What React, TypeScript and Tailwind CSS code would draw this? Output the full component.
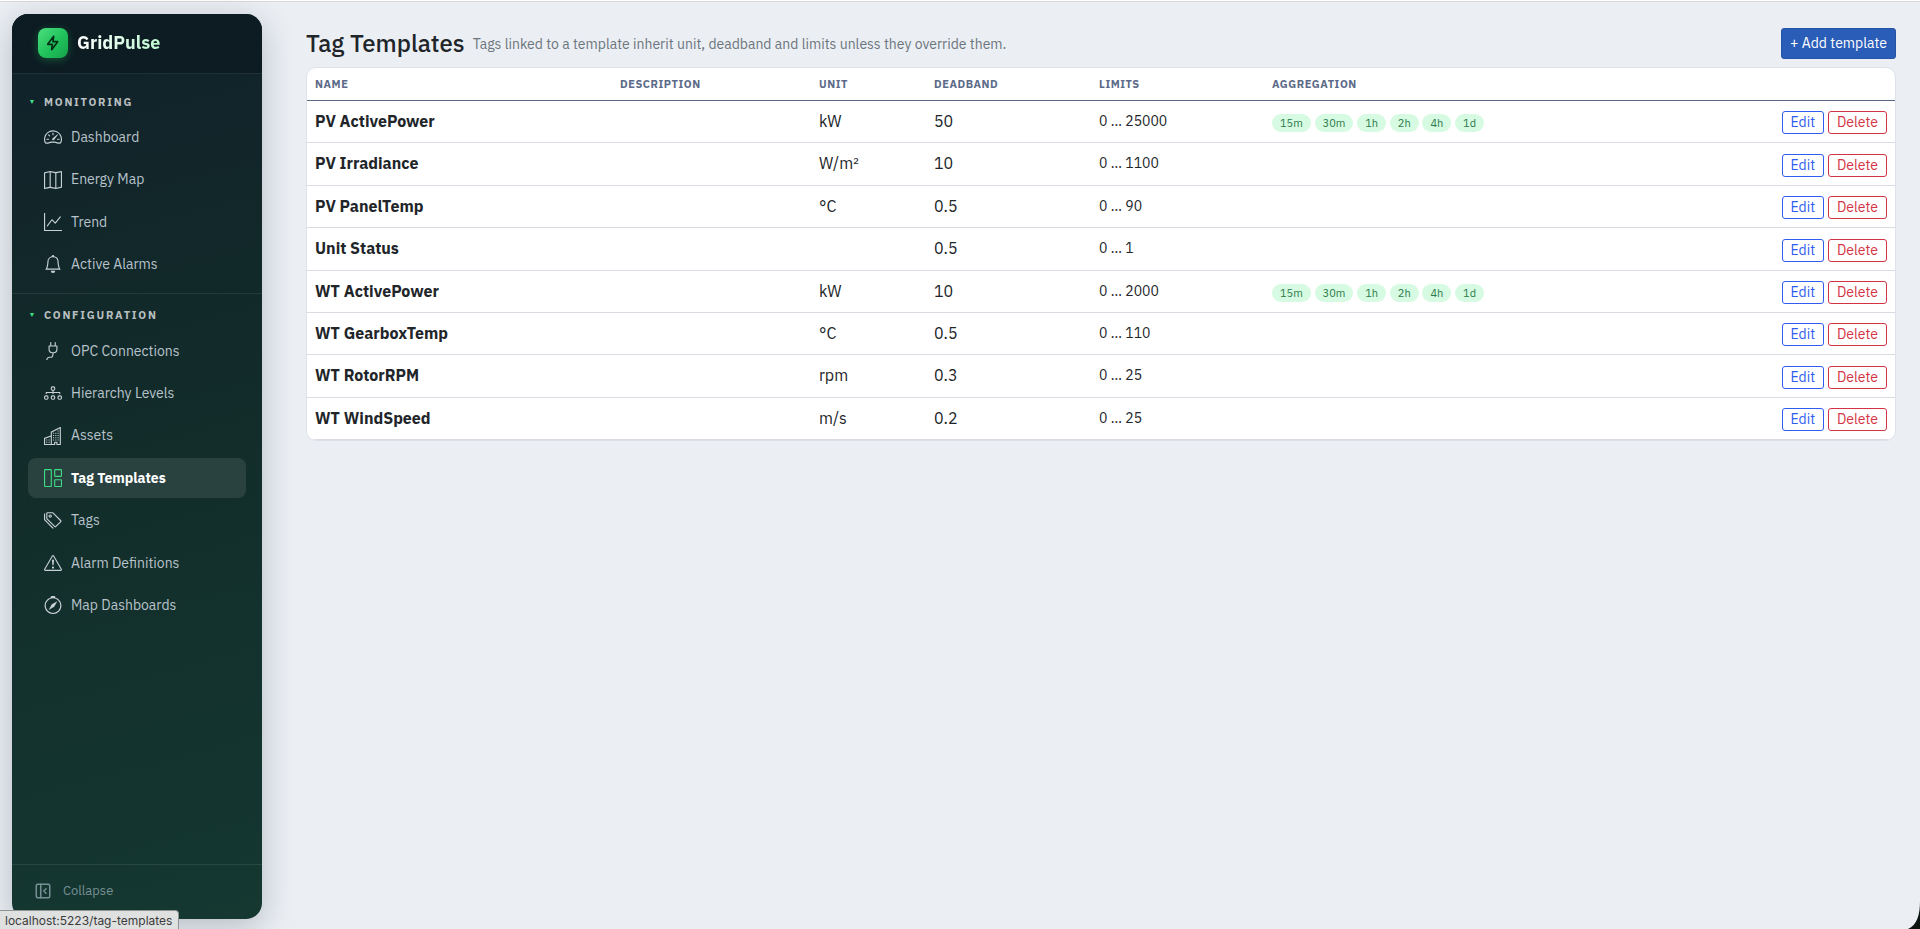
import React from "react";
import { LuPanelLeftClose } from "react-icons/lu";
import {
  BsBell,
  BsBuildings,
  BsCompass,
  BsDiagram3,
  BsExclamationTriangle,
  BsGraphUp,
  BsGrid1X2,
  BsMap,
  BsPlug,
  BsSpeedometer2,
  BsTags,
} from "react-icons/bs";
import type { IconType } from "react-icons";

type NavItem = { label: string; icon: IconType; active?: boolean };

const monitoring: NavItem[] = [
  { label: "Dashboard", icon: BsSpeedometer2 },
  { label: "Energy Map", icon: BsMap },
  { label: "Trend", icon: BsGraphUp },
  { label: "Active Alarms", icon: BsBell },
];

const configuration: NavItem[] = [
  { label: "OPC Connections", icon: BsPlug },
  { label: "Hierarchy Levels", icon: BsDiagram3 },
  { label: "Assets", icon: BsBuildings },
  { label: "Tag Templates", icon: BsGrid1X2, active: true },
  { label: "Tags", icon: BsTags },
  { label: "Alarm Definitions", icon: BsExclamationTriangle },
  { label: "Map Dashboards", icon: BsCompass },
];

const periods = ["15m", "30m", "1h", "2h", "4h", "1d"];

const templates = [
  { name: "PV ActivePower", unit: "kW", deadband: "50", limits: "0 … 25000", aggregation: periods },
  { name: "PV Irradiance", unit: "W/m²", deadband: "10", limits: "0 … 1100", aggregation: [] },
  { name: "PV PanelTemp", unit: "°C", deadband: "0.5", limits: "0 … 90", aggregation: [] },
  { name: "Unit Status", unit: "", deadband: "0.5", limits: "0 … 1", aggregation: [] },
  { name: "WT ActivePower", unit: "kW", deadband: "10", limits: "0 … 2000", aggregation: periods },
  { name: "WT GearboxTemp", unit: "°C", deadband: "0.5", limits: "0 … 110", aggregation: [] },
  { name: "WT RotorRPM", unit: "rpm", deadband: "0.3", limits: "0 … 25", aggregation: [] },
  { name: "WT WindSpeed", unit: "m/s", deadband: "0.2", limits: "0 … 25", aggregation: [] },
];

function NavGroup({ title, items }: { title: string; items: NavItem[] }) {
  return (
    <section>
      <button type="button" className="mb-0.5 flex h-[26px] w-full items-center gap-2 px-4 text-[11px] font-bold uppercase tracking-[0.16em] text-[#b9bfc0]">
        <span className="w-2 text-center text-[7px] tracking-normal text-[#3ddc84]">▼</span>
        {title}
      </button>
      <ul className="flex flex-col gap-0.5 px-4">
        {items.map(({ label, icon: Icon, active }) => (
          <li key={label}>
            <a
              href="#"
              aria-current={active ? "page" : undefined}
              className={
                active
                  ? "flex items-center gap-[9px] rounded-lg bg-[#2a423f] px-4 py-[9px] text-sm leading-[1.6] font-bold text-white"
                  : "flex items-center gap-[9px] rounded-lg px-4 py-[9px] text-sm leading-[1.6] text-[#b8c3cb]"
              }
            >
              <Icon className={active ? "size-[18px] text-[#3ddc84]" : "size-[18px] text-[#c6d0d6]"} />
              {label}
            </a>
          </li>
        ))}
      </ul>
    </section>
  );
}

function Sidebar() {
  return (
    <aside className="flex w-[250px] shrink-0 flex-col overflow-hidden rounded-2xl bg-linear-[165deg] from-[#11212a] via-[#122d2a] to-[#153831] shadow-[0_8px_32px_rgba(15,23,42,0.24)]">
      <div className="flex h-[60px] shrink-0 items-center gap-[9px] border-b border-[#1f3136] bg-[#0d1b22] px-[26px] pb-px">
        <span className="flex size-[30px] items-center justify-center rounded-lg bg-linear-to-br from-[#4ade80] via-[#22c55e] to-[#16a34a] text-[#052e16] shadow-[0_2px_8px_rgba(34,197,94,0.35)]">
          <svg viewBox="0 0 24 24" className="size-4" fill="none" stroke="currentColor" strokeWidth="2.5" strokeLinejoin="round" aria-hidden="true">
            <path d="M13 2 4 14h7l-1 8 9-12h-7l1-8z" />
          </svg>
        </span>
        <span className="bg-linear-to-r from-white to-[#bbf7d0] bg-clip-text text-lg font-bold text-transparent">GridPulse</span>
      </div>
      <nav className="flex grow flex-col">
        <div className="border-b border-[#223a3b] pt-[15px] pb-2">
          <NavGroup title="Monitoring" items={monitoring} />
        </div>
        <div className="pt-[9px]">
          <NavGroup title="Configuration" items={configuration} />
        </div>
      </nav>
      <button type="button" className="flex h-[55px] shrink-0 items-center gap-[11px] border-t border-[#28483f] px-[22px] pb-0.5 text-[13px] text-[#768f94]">
        <LuPanelLeftClose className="size-[18px]" />
        Collapse
      </button>
    </aside>
  );
}

const headCell = "px-2 py-1.5 text-left text-[11px] leading-5 font-bold uppercase tracking-[0.05em] text-[#5b6a88]";

function TemplateTable() {
  return (
    <div className="overflow-hidden rounded-[10px] border border-[#dde2ea] bg-white">
      <table className="w-full table-fixed border-collapse">
        <colgroup>
          <col className="w-[305px]" />
          <col className="w-[199px]" />
          <col className="w-[115px]" />
          <col className="w-[165px]" />
          <col className="w-[173px]" />
          <col />
          <col className="w-[130px]" />
        </colgroup>
        <thead>
          <tr className="border-b border-[#5b6a88]">
            <th className={headCell}>Name</th>
            <th className={headCell}>Description</th>
            <th className={headCell}>Unit</th>
            <th className={headCell}>Deadband</th>
            <th className={headCell}>Limits</th>
            <th className={headCell}>Aggregation</th>
            <th className={headCell} aria-label="Actions" />
          </tr>
        </thead>
        <tbody className="align-top">
          {templates.map((t) => (
            <tr key={t.name} className="border-b border-[#d9dce2]">
              <td className="p-2 font-bold">{t.name}</td>
              <td className="p-2" />
              <td className="p-2">{t.unit}</td>
              <td className="p-2">{t.deadband}</td>
              <td className="p-2 text-sm leading-6">{t.limits}</td>
              <td className="p-2">
                {t.aggregation.map((p) => (
                  <React.Fragment key={p}>
                    <span className="inline-block rounded-full bg-[#d6fbe2] px-2 text-[11px] leading-[18px] text-[#2b7a48]">
                      {p}
                    </span>{" "}
                  </React.Fragment>
                ))}
              </td>
              <td className="p-2 text-right whitespace-nowrap">
                <button type="button" className="rounded-[3px] border border-[#2f5df0] px-2 align-middle text-sm leading-[21px] text-[#2f5df0]">Edit</button>{" "}
                <button type="button" className="rounded-[3px] border border-[#d43343] px-2 align-middle text-sm leading-[21px] text-[#d43343]">Delete</button>
              </td>
            </tr>
          ))}
        </tbody>
      </table>
    </div>
  );
}

export default function App() {
  return (
    <div className="relative flex min-h-screen flex-col border-t border-white bg-[#ebeff4] font-['IBM_Plex_Sans',Roboto,sans-serif] text-base text-[#212529]">
      <div className="flex grow gap-11 border-t border-[#d9dadc] pt-3 pr-6 pb-2.5 pl-3">
        <Sidebar />
        <main className="min-w-0 grow pt-3.5">
          <header className="mb-2 flex items-center gap-2">
            <h1 className="text-2xl leading-[31px] font-medium">Tag Templates</h1>
            <p className="grow text-sm text-[#6c757d]">Tags linked to a template inherit unit, deadband and limits unless they override them.</p>
            <button type="button" className="h-[31px] rounded-[3px] border border-[#2453a6] bg-[#2a5db8] px-2 pb-px text-sm text-white">+ Add template</button>
          </header>
          <TemplateTable />
        </main>
      </div>
      <div className="absolute bottom-0 left-0 rounded-tr border-t border-r border-[#8f9494] bg-[#dfe0e0] pt-px pr-1.5 pl-[5px] font-['Inter',sans-serif] text-xs leading-[17px] text-[#3c3c3c]">
        localhost:5223/tag-templates
      </div>
      <svg viewBox="0 0 12 28" className="absolute right-0 bottom-0 h-7 w-3" aria-hidden="true">
        <path d="M12 0C12 14 9 24 0 28H12Z" fill="#0c1412" />
      </svg>
    </div>
  );
}
